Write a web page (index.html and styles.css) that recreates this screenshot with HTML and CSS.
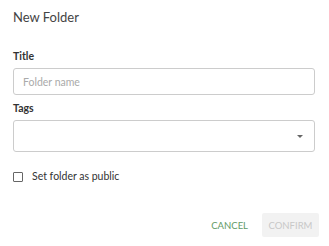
FILE: index.html
```html
<!DOCTYPE html>
<html lang="en">
<head>
    <meta charset="UTF-8">
    <title>New Folder</title>
    <link rel="stylesheet" href="styles.css">
</head>
<body>
    <div class="dialog">
        <h1 class="dialog-title">New Folder</h1>

        <form class="folder-form">
            <div class="form-group">
                <label for="title">Title</label>
                <input type="text" id="title" placeholder="Folder name">
            </div>

            <div class="form-group">
                <label for="tags">Tags</label>
                <div class="select-box" id="tags">
                    <span class="caret"></span>
                </div>
            </div>

            <label class="check-row">
                <span class="checkbox"></span>
                Set folder as public
            </label>
        </form>

        <div class="actions">
            <button type="button" class="btn-cancel">CANCEL</button>
            <button type="button" class="btn-confirm" disabled>CONFIRM</button>
        </div>
    </div>
</body>
</html>
```

FILE: styles.css
```css
* {
    margin: 0;
    padding: 0;
    box-sizing: border-box;
}

body {
    font-family: 'Lato', sans-serif;
    background: #fff;
    color: #333;
    width: 329px;
    height: 246px;
}

.dialog {
    padding: 9px 14px 9px 13px;
}

.dialog-title {
    font-size: 13px;
    font-weight: 400;
    color: #444;
    line-height: 16px;
}

.folder-form {
    margin-top: 25px;
    display: flex;
    flex-direction: column;
}

.form-group {
    display: flex;
    flex-direction: column;
}

.form-group + .form-group {
    margin-top: 7px;
}

label {
    font-size: 10.5px;
    font-weight: 700;
    color: #333;
    line-height: 13px;
    margin-bottom: 5px;
}

input[type="text"] {
    height: 27px;
    border: 1px solid #ccc;
    border-radius: 3px;
    padding: 0 9px;
    font-family: inherit;
    font-size: 10.5px;
    color: #333;
}

input::placeholder {
    color: #aaa;
}

.select-box {
    height: 32px;
    border: 1px solid #ccc;
    border-radius: 3px;
    display: flex;
    align-items: center;
    justify-content: flex-end;
    padding-right: 11px;
}

.caret {
    width: 0;
    height: 0;
    border-left: 3px solid transparent;
    border-right: 3px solid transparent;
    border-top: 3px solid #666;
}

.check-row {
    margin-top: 18px;
    display: flex;
    align-items: center;
    gap: 9px;
    font-weight: 400;
    margin-bottom: 0;
}

.checkbox {
    width: 10px;
    height: 10px;
    border: 1px solid #666;
    border-radius: 1px;
}

.actions {
    margin-top: 30px;
    display: flex;
    justify-content: flex-end;
    align-items: center;
    gap: 14px;
    margin-right: -4px;
}

button {
    font-family: inherit;
    font-size: 9.5px;
    border: none;
    background: none;
    cursor: pointer;
}

.btn-cancel {
    color: #5f9a66;
    padding: 0;
}

.btn-confirm {
    background: #f2f2f2;
    color: #c8c8c8;
    width: 57px;
    height: 24px;
    border-radius: 2px;
}
```
